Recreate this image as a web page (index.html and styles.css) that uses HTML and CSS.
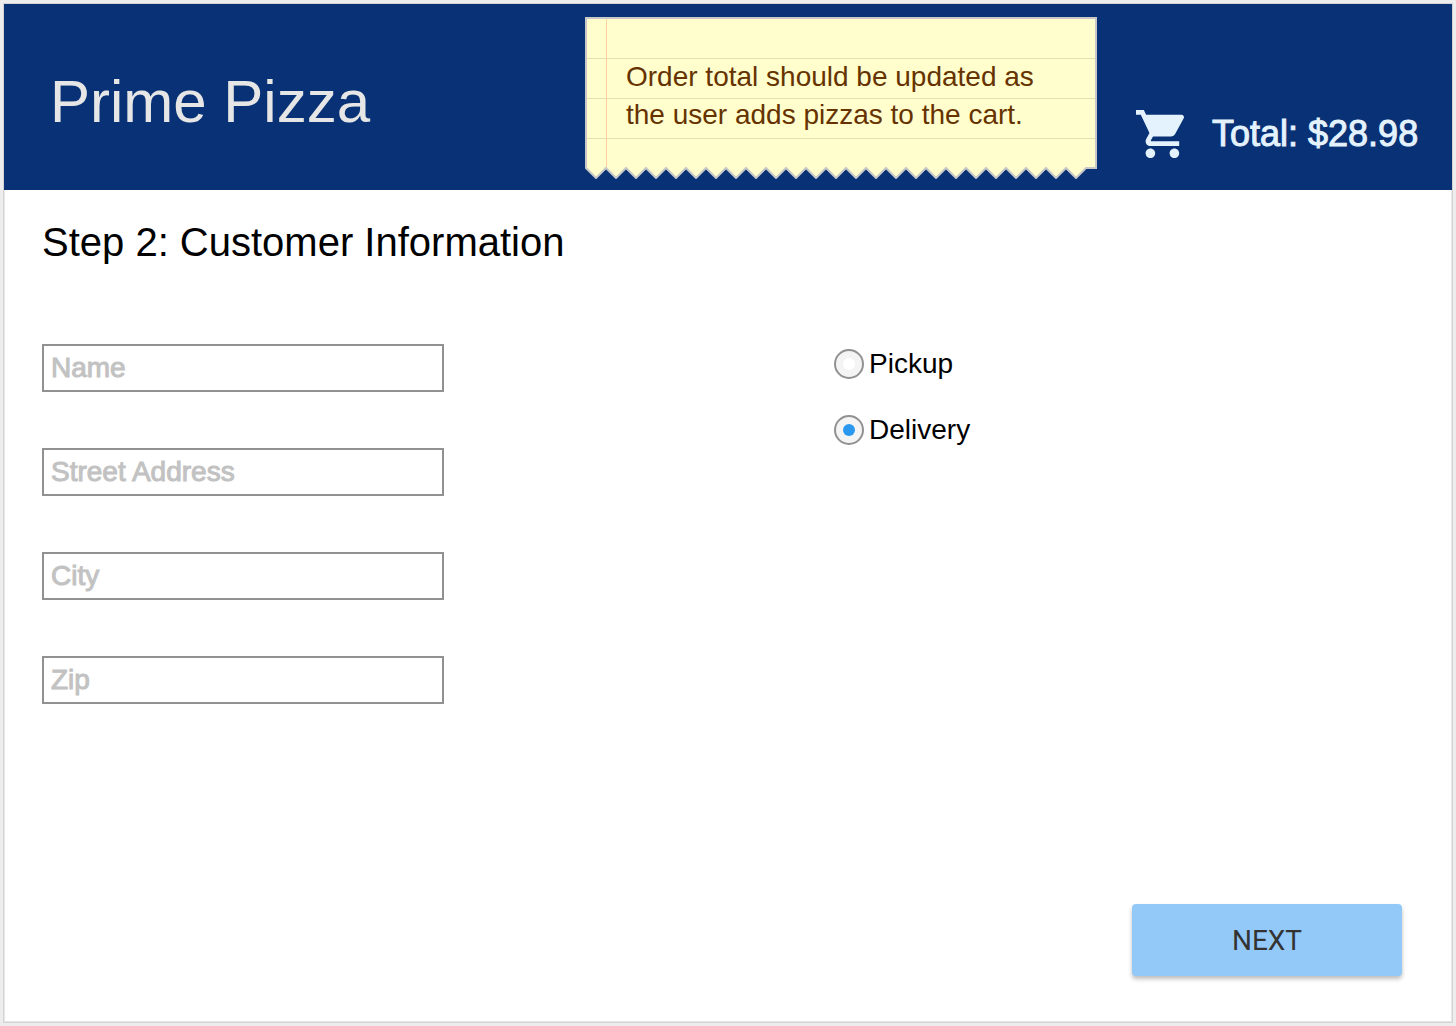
FILE: index.html
```html
<!DOCTYPE html>
<html lang="en">
<head>
<meta charset="utf-8">
<title>Prime Pizza</title>
<link rel="stylesheet" href="styles.css">
</head>
<body>
<div class="page">
  <header class="header">
    <h1 class="brand">Prime Pizza</h1>
    <aside class="note">
      <svg class="note-paper" viewBox="0 0 512 162" aria-hidden="true">
        <path fill="#fffecc" d="M1 1H511V151H501
          l-10 10-10-10-10 10-10-10-10 10-10-10-10 10-10-10-10 10-10-10
          l-10 10-10-10-10 10-10-10-10 10-10-10-10 10-10-10-10 10-10-10
          l-10 10-10-10-10 10-10-10-10 10-10-10-10 10-10-10-10 10-10-10
          l-10 10-10-10-10 10-10-10-10 10-10-10-10 10-10-10-10 10-10-10
          l-10 10-10-10-10 10-10-10-10 10-10-10-10 10-10-10-10 10-10-10z"/>
        <path d="M2 41.500H510M2 81.500H510M2 121.500H510" stroke="#e3e0b4"/>
        <path d="M21.500 2V150" stroke="#ffcf9f"/>
        <path fill="none" stroke="#c8c8c8" stroke-width="2" d="M1 1H511V151H501
          l-10 10-10-10-10 10-10-10-10 10-10-10-10 10-10-10-10 10-10-10
          l-10 10-10-10-10 10-10-10-10 10-10-10-10 10-10-10-10 10-10-10
          l-10 10-10-10-10 10-10-10-10 10-10-10-10 10-10-10-10 10-10-10
          l-10 10-10-10-10 10-10-10-10 10-10-10-10 10-10-10-10 10-10-10
          l-10 10-10-10-10 10-10-10-10 10-10-10-10 10-10-10-10 10-10-10z"/>
      </svg>
      <p class="note-text">Order total should be updated as the user adds pizzas to the cart.</p>
    </aside>
    <div class="cart">
      <svg class="cart-icon" viewBox="1 2 20 20" aria-hidden="true">
        <path fill="currentColor" d="M7 18c-1.100 0-1.990.9-1.990 2S5.900 22 7 22s2-.9 2-2-.9-2-2-2zM1 2v2h2l3.600 7.590-1.350 2.450c-.16.280-.25.610-.25.960 0 1.100.9 2 2 2h12v-2H7.420c-.14 0-.25-.11-.25-.25l.03-.12.9-1.630h7.450c.75 0 1.410-.41 1.750-1.030l3.580-6.490c.08-.14.120-.31.120-.48 0-.55-.45-1-1-1H5.210l-.94-2H1zm16 16c-1.100 0-1.990.9-1.990 2s.89 2 1.990 2 2-.9 2-2-.9-2-2-2z"/>
      </svg>
      <span class="total">Total: $28.98</span>
    </div>
  </header>
  <main class="main">
    <h2 class="step">Step 2: Customer Information</h2>
    <form class="form">
      <div class="columns">
        <div class="fields">
          <input class="field" type="text" placeholder="Name" aria-label="Name">
          <input class="field" type="text" placeholder="Street Address" aria-label="Street Address">
          <input class="field" type="text" placeholder="City" aria-label="City">
          <input class="field" type="text" placeholder="Zip" aria-label="Zip">
        </div>
        <div class="options" role="radiogroup" aria-label="Order method">
          <label class="option"><input class="radio" type="radio" name="method" value="pickup">Pickup</label>
          <label class="option"><input class="radio" type="radio" name="method" value="delivery" checked>Delivery</label>
        </div>
      </div>
      <button class="next" type="button">NEXT</button>
    </form>
  </main>
</div>
</body>
</html>
```
FILE: styles.css
```css
* {
  box-sizing: border-box;
}

body {
  margin: 0;
  min-height: 100vh;
  display: flex;
  padding: 3px;
  background: #ededed;
  color: #000;
  font-family: "Liberation Sans", Arial, sans-serif;
}

.page {
  flex: 1;
  display: flex;
  flex-direction: column;
  border: 1px solid #d4d4d4;
  background: #fff;
}

.header {
  display: flex;
  align-items: center;
  min-height: 186px;
  padding: 0 34px 0 46px;
  background: #083275;
}

.brand {
  margin: 0;
  padding-top: 10px;
  font-size: 60px;
  line-height: 72px;
  font-weight: 400;
  color: #e6e6e6;
}

.note {
  position: relative;
  width: 512px;
  height: 162px;
  margin: 2px 39px 0 auto;
  padding: 41px 40px 0 41px;
}

.note-paper {
  position: absolute;
  inset: 0;
  width: 100%;
  height: 100%;
}

.note-text {
  position: relative;
  margin: 0;
  font-size: 28px;
  line-height: 38px;
  color: #663300;
}

.cart {
  display: flex;
  align-items: center;
  gap: 28px;
  width: 282px;
  padding-top: 74px;
  color: #e4f2fe;
}

.cart-icon {
  flex: none;
  width: 48px;
  height: 48px;
}

.total {
  font-size: 36px;
  line-height: 48px;
  white-space: nowrap;
  -webkit-text-stroke: 1px currentColor;
}

.main {
  flex: 1;
  display: flex;
  flex-direction: column;
  padding: 28px 49px 45px 37px;
  border: 1px solid #e6e6e6;
  border-top: 0;
}

.step {
  margin: 0 0 78px;
  font-size: 40px;
  line-height: 48px;
  font-weight: 400;
}

.form {
  flex: 1;
  display: flex;
  flex-direction: column;
  justify-content: space-between;
}

.columns {
  display: grid;
  grid-template-columns: 99fr 71fr;
}

.fields {
  display: flex;
  flex-direction: column;
  gap: 56px;
}

.field {
  width: 402px;
  height: 48px;
  padding: 0 7px;
  border: 2px solid #919191;
  border-radius: 0;
  background: #fff;
  color: #000;
  font: 28px "Liberation Sans", Arial, sans-serif;
}

.field::placeholder {
  color: #c2c2c2;
  opacity: 1;
  -webkit-text-stroke: 1px #c2c2c2;
}

.options {
  display: flex;
  flex-direction: column;
  align-items: flex-start;
  gap: 26px;
}

.option {
  display: flex;
  align-items: center;
  gap: 5px;
  font-size: 28px;
  line-height: 40px;
}

.radio {
  appearance: none;
  display: grid;
  place-items: center;
  width: 30px;
  height: 30px;
  margin: 0;
  border: 2px solid #919191;
  border-radius: 50%;
  background: #f4f4f4;
}

.radio::before {
  content: "";
  width: 12px;
  height: 12px;
  border-radius: 50%;
  background: #fff;
}

.radio:checked::before {
  background: #2b98f0;
}

.next {
  align-self: flex-end;
  width: 270px;
  height: 72px;
  border: 0;
  border-radius: 4px;
  background: #93c9f8;
  box-shadow: 0 3px 4px rgba(0, 0, 0, 0.26);
  color: #333;
  font: 28px Roboto, sans-serif;
}
```
